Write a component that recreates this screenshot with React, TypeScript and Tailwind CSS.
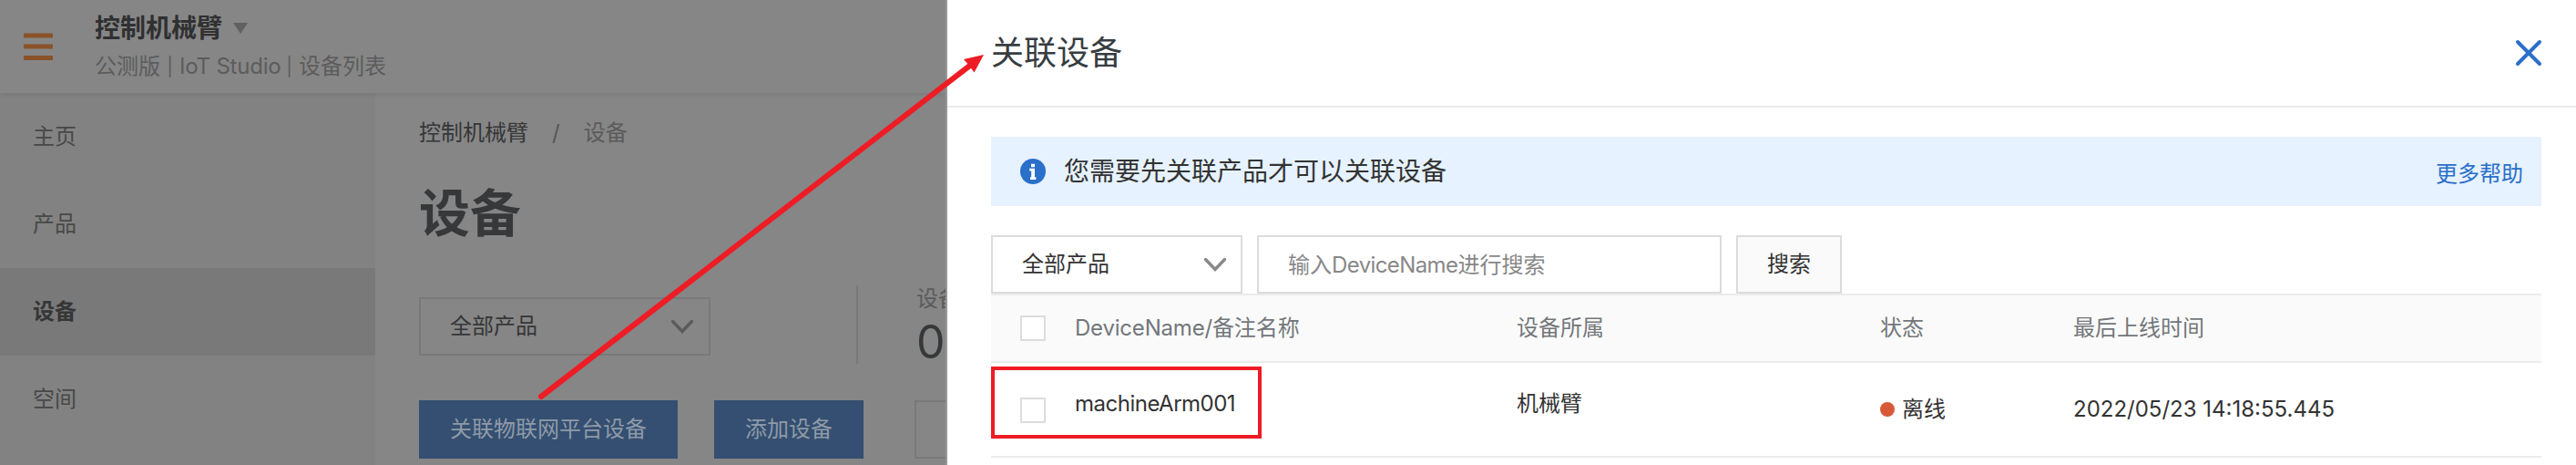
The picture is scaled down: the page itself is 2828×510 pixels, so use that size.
import React from "react";

const FONT = "font-[Inter,'Noto_Sans_CJK_SC',sans-serif]";

function Chevron({ className }: { className: string }) {
  return (
    <svg viewBox="0 0 26 16" fill="none" stroke="currentColor" strokeWidth="3.4" strokeLinecap="round" className={`h-4 w-[26px] ${className}`}>
      <path d="M2.5 2.5 L13 13.5 L23.5 2.5" />
    </svg>
  );
}

const navItems = [
  { label: "主页", active: false },
  { label: "产品", active: false },
  { label: "设备", active: true },
  { label: "空间", active: false },
];

function Sidebar() {
  return (
    <nav className="w-[412px] shrink-0 bg-[#828282]">
      {navItems.map((item) => (
        <div
          key={item.label}
          className={
            item.active
              ? "flex h-24 items-center bg-[#797979] pl-9 font-bold text-[#353637]"
              : "flex h-24 items-center pl-9 text-[#484848]"
          }
        >
          {item.label}
        </div>
      ))}
    </nav>
  );
}

function TopBar() {
  return (
    <header className="relative z-10 flex h-[102px] shrink-0 bg-[#868686] shadow-[0_1px_6px_rgba(0,0,0,0.1)]">
      <svg viewBox="0 0 32 30" className="mt-[36px] ml-[26px] h-[30px] w-8 shrink-0" fill="#8a5229">
        <rect y="0.5" width="32" height="5" />
        <rect y="12.5" width="32" height="5" />
        <rect y="25" width="32" height="5" />
      </svg>
      <div className="ml-[46px] whitespace-nowrap">
        <div className="mt-[10px] flex h-[42px] items-center text-[28px] font-bold text-[#2f3031]">
          控制机械臂
          <svg viewBox="0 0 16 12" className="ml-3 h-3 w-4" fill="#606060">
            <path d="M0 0H16L8 12Z" />
          </svg>
        </div>
        <div className="flex h-[42px] items-center text-[#5c5c5c]">
          <span>公测版</span>
          <span className="w-[21px] text-center text-[20px]">|</span>
          <span className="w-[110px] text-center tracking-[-0.2px]">IoT Studio</span>
          <span className="w-[21px] text-center text-[20px]">|</span>
          <span>设备列表</span>
        </div>
      </div>
    </header>
  );
}

function MainArea() {
  return (
    <main className="min-w-0 flex-1 overflow-hidden bg-[#868686] pl-12 whitespace-nowrap">
      <div className="mt-[24px] flex h-10 items-center text-[#353637]">
        <span>控制机械臂</span>
        <span className="ml-[26px] text-[#555657]">/</span>
        <span className="ml-[26px] text-[#5b5b5b]">设备</span>
      </div>
      <h1 className="mt-[28px] flex h-20 items-center text-[56px] font-bold text-[#373839]">设备</h1>
      <div className="mt-[36px] flex h-[90px]">
        <div className="mt-[16px] flex h-16 w-80 shrink-0 items-center justify-between border-2 border-[#797979] pr-4 pl-8 text-[#353637]">
          全部产品
          <Chevron className="text-[#5b5b5b]" />
        </div>
        <div className="mt-[3px] ml-40 h-[86px] w-0.5 shrink-0 bg-[#797979]" />
        <div className="ml-16 shrink-0">
          <div className="flex h-9 items-center text-[#5b5b5b]">设备数</div>
          <div className="mt-[5px] flex h-12 items-center text-[50px] text-[#373839]">0</div>
        </div>
      </div>
      <div className="mt-[39px] flex text-[#8f9aa8]">
        <div className="flex h-16 w-[284px] shrink-0 items-center justify-center bg-[#344f71]">关联物联网平台设备</div>
        <div className="ml-10 flex h-16 w-[164px] shrink-0 items-center justify-center bg-[#344f71]">添加设备</div>
        <div className="ml-14 h-16 w-40 shrink-0 border-2 border-[#797979]" />
      </div>
    </main>
  );
}

const COLS = "grid grid-cols-[92px_485px_399px_212px_1fr]";

function Drawer() {
  return (
    <section className="flex w-[1788px] shrink-0 flex-col bg-white whitespace-nowrap">
      <div className="flex h-[118px] items-center justify-between border-b-2 border-[#ebebeb] pr-[36px] pl-12">
        <h2 className="text-[36px] text-[#373d41]">关联设备</h2>
        <svg viewBox="0 0 32 32" className="h-8 w-8" stroke="#2a6fc9" strokeWidth="4" strokeLinecap="round">
          <path d="M4 4 L28 28 M28 4 L4 28" />
        </svg>
      </div>
      <div className="mr-[38px] ml-12 flex flex-col">
        <div className="mt-8 flex h-[76px] items-center bg-[#e6f2ff] pr-5 pl-8">
          <svg viewBox="0 0 28 28" className="h-7 w-7">
            <circle cx="14" cy="14" r="14" fill="#2a6fc9" />
            <path d="M12 5.8H16V9.2H12Z M10.2 10.8H16V20.3H17.4V23H11V20.3H12.2V13.4H10.2Z" fill="#fff" />
          </svg>
          <span className="ml-5 text-[28px] text-[#333333]">您需要先关联产品才可以关联设备</span>
          <span className="mt-1.5 ml-auto text-[#2a6fc9]">更多帮助</span>
        </div>
        <div className="mt-8 flex gap-4 text-[#333333]">
          <div className="flex h-16 w-[276px] items-center justify-between border-2 border-[#dcdcdc] pr-[15px] pl-8">
            全部产品
            <Chevron className="text-[#888888]" />
          </div>
          <div className="flex h-16 w-[510px] items-center border-2 border-[#dcdcdc] pt-0.5 pl-8 text-[#888888]">
            <span>
              输入<span className="tracking-[-0.6px]">DeviceName</span>进行搜索
            </span>
          </div>
          <div className="flex h-16 w-[116px] items-center justify-center border-2 border-[#dcdcdc] bg-[#fafafa]">搜索</div>
        </div>
        <div className={`${COLS} h-[76px] items-center border-y-2 border-[#ebebeb] bg-[#fafafa] text-[#73777a]`}>
          <div className="ml-8 h-7 w-7 border-2 border-[#dcdcdc] bg-white" />
          <div>
            <span className="tracking-[-0.2px]">DeviceName/</span>备注名称
          </div>
          <div>设备所属</div>
          <div>状态</div>
          <div>最后上线时间</div>
        </div>
        <div className={`relative ${COLS} h-[104px] items-center border-b-2 border-[#ebebeb] text-[#333333]`}>
          <div className="mt-[2px] ml-8 h-7 w-7 border-2 border-[#dcdcdc] bg-white" />
          <div className="-mt-3 tracking-[-0.5px]">machineArm001</div>
          <div className="-mt-3">机械臂</div>
          <div className="flex items-center">
            <span className="h-4 w-4 rounded-full bg-[#d65a38]" />
            <span className="ml-2">离线</span>
          </div>
          <div>2022/05/23 14:18:55.445</div>
          <div className="absolute top-1 left-0 h-[79px] w-[297px] border-4 border-[#ee1c25]" />
        </div>
      </div>
    </section>
  );
}

export default function App() {
  return (
    <div className={`relative flex h-[510px] w-[2828px] overflow-hidden bg-white text-[24px] leading-none ${FONT}`}>
      <div className="flex w-[1040px] shrink-0 flex-col overflow-hidden border-r-2 border-[#969696]">
        <TopBar />
        <div className="flex min-h-0 flex-1">
          <Sidebar />
          <MainArea />
        </div>
      </div>
      <Drawer />
      <svg viewBox="0 0 1100 510" className="absolute top-0 left-0 z-20 h-[510px] w-[1100px]">
        <path d="M594 435 L1066 71" stroke="#ee1c25" strokeWidth="6" strokeLinecap="round" />
        <path d="M1080 60 L1058 65 L1064 72 L1069.5 79.5 Z" fill="#ee1c25" />
      </svg>
    </div>
  );
}
